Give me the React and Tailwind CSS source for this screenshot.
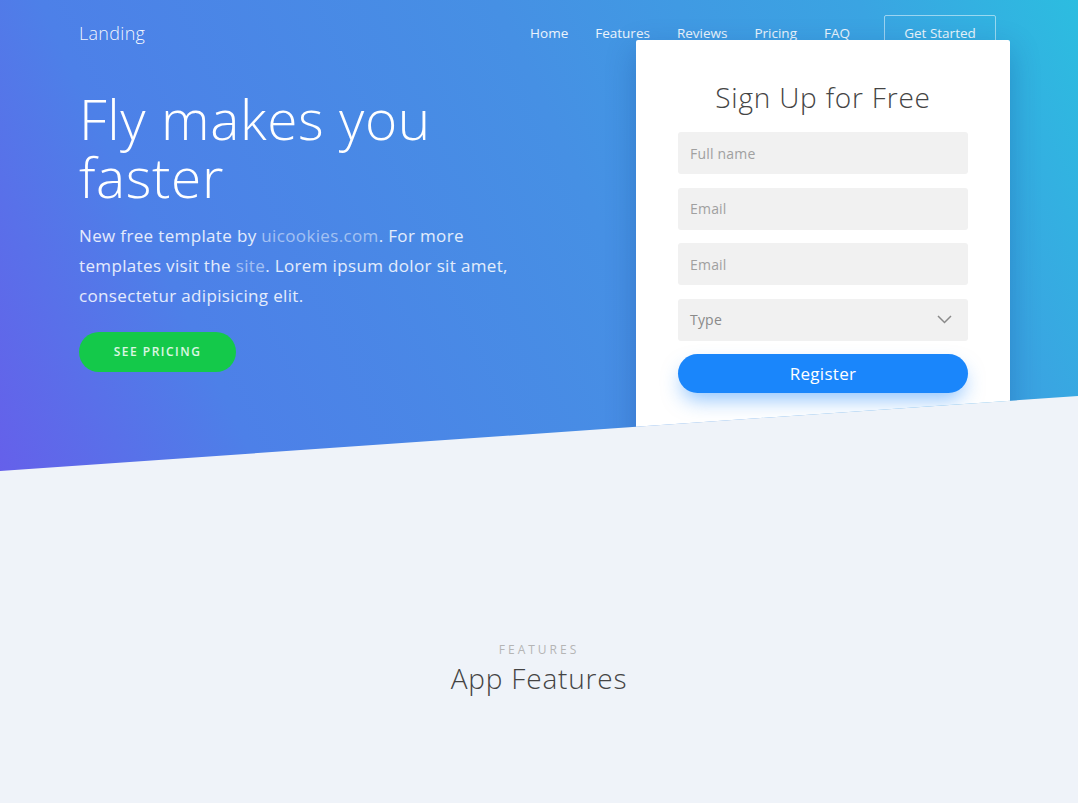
import React from "react";

function Field({ label }) {
  return (
    <div className="h-[42px] w-full rounded-[3px] bg-[#f1f1f1] px-[12px] flex items-center text-[14px] tracking-[0.2px] text-[#a0a0a0]">
      {label}
    </div>
  );
}

export default function App() {
  return (
    <div className="min-h-[803px] bg-[#eff3f9] font-['Open_Sans',sans-serif]">
      <section className="h-[471px] bg-[linear-gradient(65deg,#6560ea_0%,#4d80e8_20%,#4690e4_55%,#3aa4e2_83%,#2cbde0_100%)] [clip-path:polygon(0_0,100%_0,100%_396px,0_100%)]">
        <div className="w-[920px] mx-auto">
          <nav className="flex items-center pt-[15px] h-[52px]">
            <div className="text-[18px] text-white/95 font-light tracking-[0.3px]">Landing</div>
            <div className="ml-auto flex items-center gap-[27px] text-[13.5px] text-white/90">
              <span>Home</span>
              <span>Features</span>
              <span>Reviews</span>
              <span>Pricing</span>
              <span>FAQ</span>
            </div>
            <div className="ml-[34px] mr-[3px] w-[112px] h-[37px] border border-white/50 rounded-[2px] flex items-center justify-center text-[13.5px] text-white/90">
              Get Started
            </div>
          </nav>
          <div className="flex mt-[-12px]">
            <div className="w-[557px] pt-[50px]">
              <h1 className="text-[55px] leading-[58px] font-light text-white tracking-[0.6px]">
                Fly makes you
                <br />
                faster
              </h1>
              <p className="mt-[15px] w-[470px] text-[17px] leading-[30px] tracking-[0.35px] text-white/85">
                New free template by <span className="text-white/50">uicookies.com</span>. For more
                <br />
                templates visit the <span className="text-white/50">site</span>. Lorem ipsum dolor sit amet,
                <br />
                consectetur adipisicing elit.
              </p>
              <button className="mt-[21px] w-[157px] h-[40px] rounded-full bg-[#14c94a] text-white/85 text-[12px] font-semibold tracking-[1.5px]">
                SEE PRICING
              </button>
            </div>
            <div className="w-[374px] mr-[-11px] bg-white shadow-[0_10px_30px_rgba(0,40,120,0.25)] rounded-[2px] px-[42px] pt-[40px] pb-[80px]">
              <h2 className="text-center text-[28px] leading-[34px] text-[#444] font-light tracking-[0.8px]">
                Sign Up for Free
              </h2>
              <div className="mt-[18px] flex flex-col gap-[13.5px]">
                <Field label="Full name" />
                <Field label="Email" />
                <Field label="Email" />
                <div className="h-[42px] w-full rounded-[3px] bg-[#f1f1f1] pl-[12px] pr-[16px] flex items-center text-[14px] tracking-[0.2px] text-[#8a8a8a]">
                  <span>Type</span>
                  <svg className="ml-auto" width="15" height="9" viewBox="0 0 15 9" fill="none">
                    <polyline points="1,1 7.5,7.5 14,1" stroke="#8a8a8a" strokeWidth="1.5" />
                  </svg>
                </div>
                <button className="h-[39px] w-full rounded-full bg-[#1a86fb] text-white text-[17px] tracking-[0.3px] shadow-[0_10px_20px_-4px_rgba(26,134,251,0.5)]">
                  Register
                </button>
              </div>
            </div>
          </div>
        </div>
      </section>
      <section className="pt-[170px] text-center">
        <div className="text-[12px] tracking-[3px] text-[#b5b5b5]">FEATURES</div>
        <h2 className="mt-[2px] text-[28px] leading-[34px] text-[#444] font-light tracking-[0.8px]">App Features</h2>
      </section>
    </div>
  );
}
